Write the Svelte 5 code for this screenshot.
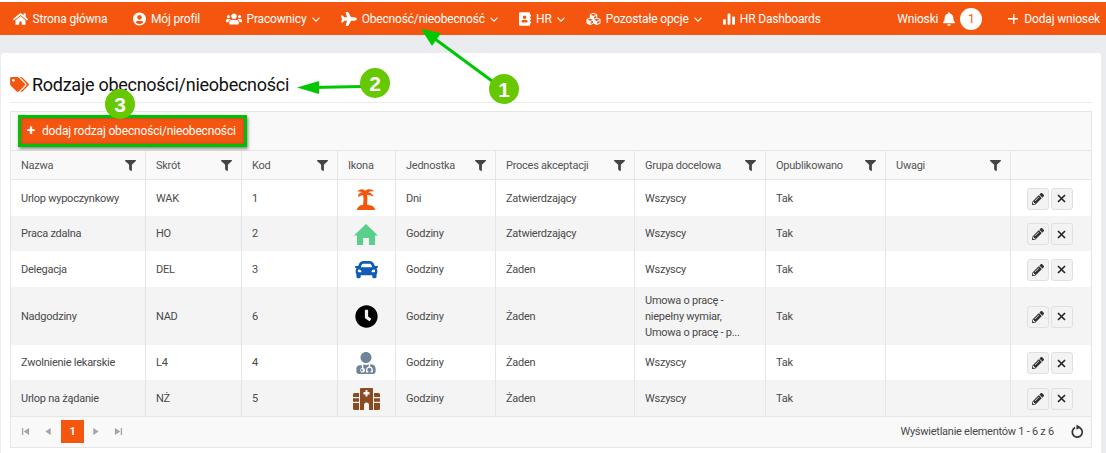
<script>
  const p = {
    home: ['0 0 576 512', 'M280.37 148.26L96 300.11V464a16 16 0 0 0 16 16l112.06-.29a16 16 0 0 0 15.92-16V368a16 16 0 0 1 16-16h64a16 16 0 0 1 16 16v95.64a16 16 0 0 0 16 16.05L464 480a16 16 0 0 0 16-16V300L295.67 148.26a12.19 12.19 0 0 0-15.3 0zM571.6 251.47L488 182.56V44.05a12 12 0 0 0-12-12h-56a12 12 0 0 0-12 12v72.61L318.47 43a48 48 0 0 0-61 0L4.34 251.47a12 12 0 0 0-1.6 16.9l25.5 31A12 12 0 0 0 45.15 301l235.22-193.74a12.19 12.19 0 0 1 15.3 0L530.9 301a12 12 0 0 0 16.9-1.6l25.5-31a12 12 0 0 0-1.7-16.93z'],
    user: ['0 0 496 512', 'M248 8C111 8 0 119 0 256s111 248 248 248 248-111 248-248S385 8 248 8zm0 96c48.6 0 88 39.4 88 88s-39.4 88-88 88-88-39.4-88-88 39.4-88 88-88zm0 344c-58.7 0-111.3-26.6-146.5-68.2 18.8-35.4 55.6-59.8 98.5-59.8 2.4 0 4.8.4 7.1 1.1 13 4.2 26.6 6.9 40.9 6.9 14.3 0 28-2.7 40.9-6.9 2.3-.7 4.7-1.1 7.1-1.1 42.9 0 79.7 24.4 98.5 59.8C359.3 421.4 306.7 448 248 448z'],
    users: ['0 0 640 512', 'M96 224c35.3 0 64-28.7 64-64s-28.7-64-64-64-64 28.7-64 64 28.7 64 64 64zm448 0c35.3 0 64-28.7 64-64s-28.7-64-64-64-64 28.7-64 64 28.7 64 64 64zm32 32h-64c-17.6 0-33.5 7.1-45.1 18.6 40.3 22.1 68.9 62 75.1 109.4h66c17.7 0 32-14.3 32-32v-32c0-35.3-28.7-64-64-64zm-256 0c61.9 0 112-50.1 112-112S381.9 32 320 32 208 82.1 208 144s50.1 112 112 112zm76.8 32h-8.3c-20.8 10-43.9 16-68.5 16s-47.6-6-68.5-16h-8.3C179.6 288 128 339.6 128 403.2V432c0 26.5 21.5 48 48 48h288c26.5 0 48-21.5 48-48v-28.8c0-63.6-51.6-115.2-115.2-115.2zm-223.7-13.4C161.5 263.1 145.6 256 128 256H64c-35.3 0-64 28.7-64 64v32c0 17.7 14.3 32 32 32h65.9c6.3-47.4 34.9-87.3 75.2-109.4z'],
    plane: ['0 0 576 512', 'M480 192H365.71L260.61 8.06A16.014 16.014 0 0 0 246.71 0h-65.5c-10.63 0-18.3 10.17-15.38 20.39L214.86 192H112l-43.2-57.6c-3.02-4.03-7.77-6.4-12.8-6.4H16.01C5.6 128-2.04 137.78.49 147.88L32 256 .49 364.12C-2.04 374.22 5.6 384 16.01 384H56c5.04 0 9.78-2.37 12.8-6.4L112 320h102.86l-49.03 171.6c-2.92 10.22 4.75 20.4 15.38 20.4h65.5c5.74 0 11.04-3.08 13.89-8.06L365.71 320H480c35.35 0 96-28.65 96-64s-60.65-64-96-64z'],
    badge: ['0 0 448 512', 'M436 160c6.6 0 12-5.4 12-12v-40c0-6.6-5.4-12-12-12h-20V48c0-26.5-21.5-48-48-48H48C21.5 0 0 21.5 0 48v416c0 26.5 21.5 48 48 48h320c26.5 0 48-21.5 48-48v-48h20c6.6 0 12-5.4 12-12v-40c0-6.6-5.4-12-12-12h-20v-64h20c6.6 0 12-5.4 12-12v-40c0-6.6-5.4-12-12-12h-20v-64h20zm-228-32c35.3 0 64 28.7 64 64s-28.7 64-64 64-64-28.7-64-64 28.7-64 64-64zm112 236.800c0 10.600-10 19.200-22.400 19.200H118.400C106 384 96 375.400 96 364.800v-19.200c0-31.800 30.100-57.600 67.200-57.600h5c12.300 5.100 25.700 8 39.800 8s27.500-2.900 39.800-8h5c37.100 0 67.200 25.800 67.200 57.600v19.200z'],
    cubes: ['0 0 512 512', 'M488.6 250.2L392 214V105.5c0-15-9.3-28.4-23.4-33.7l-100-37.5c-8.1-3.1-17.1-3.1-25.3 0l-100 37.5c-14.1 5.3-23.4 18.7-23.4 33.7V214l-96.6 36.2C9.3 255.5 0 268.9 0 283.9V394c0 13.6 7.7 26.1 19.9 32.2l100 50c10.1 5.1 22.1 5.1 32.2 0l103.9-52 103.9 52c10.1 5.1 22.1 5.1 32.2 0l100-50c12.2-6.1 19.9-18.6 19.9-32.2V283.9c0-15-9.3-28.4-23.4-33.7zM358 214.8l-85 31.9v-68.2l85-37v73.3zM154 104.1l102-38.2 102 38.2v.6l-102 41.4-102-41.4v-.6zm84 291.1l-85 42.5v-79.1l85-38.8v75.4zm0-112l-102 41.4-102-41.4v-.6l102-38.2 102 38.2v.6zm240 112l-85 42.5v-79.1l85-38.8v75.4zm0-112l-102 41.4-102-41.4v-.6l102-38.2 102 38.2v.6z'],
    chart: ['0 0 512 512', 'M0 288c0-13 10-24 24-24h72c14 0 24 11 24 24v184c0 13-10 24-24 24H24c-14 0-24-11-24-24zM196 40c0-13 10-24 24-24h72c14 0 24 11 24 24v432c0 13-10 24-24 24h-72c-14 0-24-11-24-24zM392 176c0-13 10-24 24-24h72c14 0 24 11 24 24v296c0 13-10 24-24 24h-72c-14 0-24-11-24-24z'],
    bell: ['0 0 448 512', 'M224 512c35.32 0 63.97-28.65 63.97-64H160.03c0 35.35 28.65 64 63.97 64zm215.39-149.71c-19.32-20.76-55.47-51.99-55.47-154.29 0-77.7-54.48-139.9-127.94-155.16V32c0-17.67-14.32-32-31.98-32s-31.98 14.33-31.98 32v20.84C118.56 68.1 64.08 130.3 64.08 208c0 102.3-36.15 133.53-55.47 154.29-6 6.45-8.66 14.16-8.61 21.71.11 16.4 12.98 32 32.1 32h383.8c19.12 0 32-15.6 32.1-32 .05-7.55-2.61-15.27-8.61-21.71z'],
    tags: ['0 0 640 512', 'M497.941 225.941L286.059 14.059A48 48 0 0 0 252.118 0H48C21.49 0 0 21.49 0 48v204.118a48 48 0 0 0 14.059 33.941l211.882 211.882c18.744 18.745 49.136 18.746 67.882 0l204.118-204.118c18.745-18.745 18.745-49.137 0-67.882zM112 160c-26.51 0-48-21.49-48-48s21.49-48 48-48 48 21.49 48 48-21.49 48-48 48zm513.941 133.823L421.823 497.941c-18.745 18.745-49.137 18.745-67.882 0l-.36-.36L527.64 323.522c16.999-16.999 26.36-39.6 26.36-63.64s-9.362-46.641-26.36-63.64L331.397 0h48.721a48 48 0 0 1 33.941 14.059l211.882 211.882c18.745 18.745 18.745 49.137 0 67.882z'],
    filter: ['0 0 512 512', 'M487.976 0H24.028C2.71 0-8.047 25.866 7.058 40.971L192 225.941V432c0 7.831 3.821 15.17 10.237 19.662l80 55.98C298.02 518.69 320 507.493 320 487.98V225.941l184.947-184.97C520.021 25.896 509.338 0 487.976 0z'],
    car: ['0 0 512 512', 'M499.99 176h-59.87l-16.64-41.6C406.38 91.63 365.57 64 319.5 64h-127c-46.06 0-86.88 27.63-103.99 70.4L71.87 176H12.01C4.2 176-1.53 183.34.37 190.91l6 24C7.7 220.25 12.5 224 18.01 224h20.07C24.65 235.73 16 252.78 16 272v48c0 16.12 6.16 30.67 16 41.93V416c0 17.67 14.33 32 32 32h32c17.67 0 32-14.33 32-32v-32h256v32c0 17.67 14.33 32 32 32h32c17.67 0 32-14.33 32-32v-54.07c9.84-11.25 16-25.8 16-41.93v-48c0-19.22-8.65-36.27-22.07-48H494c5.51 0 10.31-3.75 11.64-9.09l6-24c1.89-7.57-3.84-14.91-11.65-14.91zm-352.06-17.83c7.29-18.22 24.94-30.17 44.57-30.17h127c19.63 0 37.28 11.95 44.57 30.17L384 208H128l19.93-49.83zM96 319.8c-19.2 0-32-12.76-32-31.9S76.8 256 96 256s48 28.71 48 47.85-28.8 15.95-48 15.95zm320 0c-19.2 0-48 3.19-48-15.95S396.8 256 416 256s32 12.76 32 31.9-12.8 31.9-32 31.9z'],
    clock: ['0 0 512 512', 'M256 8C119 8 8 119 8 256s111 248 248 248 248-111 248-248S393 8 256 8zm57.1 350.1L224.9 294c-3.1-2.3-4.9-5.9-4.9-9.7V116c0-6.6 5.4-12 12-12h48c6.6 0 12 5.4 12 12v137.7l63.5 46.2c5.4 3.9 6.5 11.4 2.6 16.8l-28.2 38.8c-3.9 5.3-11.4 6.5-16.8 2.6z'],
    doc: ['0 0 448 512', 'M224 256c70.7 0 128-57.3 128-128S294.7 0 224 0 96 57.3 96 128s57.3 128 128 128zM104 424c0 13.3 10.7 24 24 24s24-10.7 24-24-10.7-24-24-24-24 10.7-24 24zm216-135.4v49c36.5 7.4 64 39.8 64 78.4v41.7c0 7.6-5.4 14.2-12.9 15.7l-32.2 6.4c-4.3.9-8.5-1.9-9.4-6.3l-3.1-15.7c-.9-4.3 1.9-8.6 6.3-9.4l19.3-3.9V416c0-62.8-96-65.1-96 1.9v26.7l19.3 3.9c4.3.9 7.1 5.1 6.3 9.4l-3.1 15.7c-.9 4.3-5.1 7.1-9.4 6.3l-31.2-4.2c-7.9-1.1-13.8-7.8-13.8-15.9V416c0-38.6 27.5-70.9 64-78.4v-45.2c-2.2-.7-4.4-1.1-6.7-1.9-18 6.3-37.3 9.5-57.3 9.5s-39.3-3.2-57.3-9.5c-1.9.6-3.8 1-5.7 1.7v77.3c23.1 6.9 40 28.1 40 53.4 0 30.9-25.1 56-56 56s-56-25.1-56-56c0-25.3 16.9-46.5 40-53.4v-59.4C29.3 298.9 0 341.1 0 390.4V456c0 30.9 25.1 56 56 56h336c30.9 0 56-25.1 56-56v-65.6c0-48.8-29.1-91.3-72-101.8z'],
    pencil: ['0 0 512 512', 'M497.9 142.1l-46.1 46.1c-4.7 4.7-12.3 4.7-17 0l-111-111c-4.7-4.7-4.7-12.3 0-17l46.1-46.1c18.7-18.7 49.1-18.7 67.9 0l60.1 60.1c18.8 18.7 18.8 49.1 0 67.9zM284.2 99.8L21.6 362.4.4 483.9c-2.9 16.4 11.4 30.6 27.8 27.8l121.5-21.3 262.6-262.6c4.7-4.7 4.7-12.3 0-17l-111-111c-4.8-4.7-12.4-4.7-17.1 0zM124.1 339.9c-5.5-5.5-5.5-14.3 0-19.8l154-154c5.5-5.5 14.3-5.5 19.8 0s5.5 14.3 0 19.8l-154 154c-5.5 5.5-14.3 5.5-19.8 0zM88 424h48v36.3l-64.5 11.3-31.1-31.1L51.7 376H88v48z'],
    palm: ['0 0 20 22', 'M1 22c0-3 3-5 6-5.300C7.600 13 7.700 9.500 7 7.200 5 7.300 3.600 8 2.400 9.300 1.600 6.500 3.600 4.400 6 4.300 4.800 3.400 3 3.300 1.300 3.700 2.800 1.200 6.600.2 9 2.700 11.200.500 15.800.5 18.600 3.600 16.400 3.100 14 3.200 12.400 4.400 15 4.500 17 6 17.400 8.700 15.500 7.300 13 6.900 10.900 6.900 11.700 10 11.500 13.500 10.900 16.700 14.800 16.800 19 18.500 19 22z'],
    house: ['0 0 24 21', 'M12 0 24 11.500h-3V21h-6v-7H9v7H3v-9.500H0z'],
    hospital: ['0 0 27 22', 'M8 0h11a1 1 0 0 1 1 1v21h-4v-5a2.500 2.500 0 0 0-5 0v5H7V1a1 1 0 0 1 1-1zM12.500 2v2h-2v2.500h2v2h2v-2h2V4h-2V2zM1.500 5H6v4H0V6.500A1.500 1.500 0 0 1 1.500 5zM0 10.300h6v3.500H0zM0 15.100h6V22H1.500A1.500 1.500 0 0 1 0 20.500zM21 5h4.500A1.500 1.500 0 0 1 27 6.500V9h-6zM21 10.300h6v3.500h-6zM21 15.100h6v5.400a1.500 1.500 0 0 1-1.500 1.500H21z'],
    first: ['0 0 10 10', 'M1 1h1.500v8H1zM9 1v8L3 5z'],
    prev: ['0 0 10 10', 'M7.500 1v8L1.500 5z'],
    next: ['0 0 10 10', 'M2.500 1v8l6-4z'],
    last: ['0 0 10 10', 'M1 1v8l6-4zM7.500 1H9v8H7.500z']
  };

  const leftNav = [
    { icon: 'home', label: 'Strona główna', w: 15 },
    { icon: 'user', label: 'Mój profil', w: 13 },
    { icon: 'users', label: 'Pracownicy', w: 16, caret: true },
    { icon: 'plane', label: 'Obecność/nieobecność', w: 16, caret: true },
    { icon: 'badge', label: 'HR', w: 12, caret: true },
    { icon: 'cubes', label: 'Pozostałe opcje', w: 15, caret: true },
    { icon: 'chart', label: 'HR Dashboards', w: 12 }
  ];

  const cols = [
    { name: 'Nazwa', w: 134, filter: true },
    { name: 'Skrót', w: 96, filter: true },
    { name: 'Kod', w: 96, filter: true },
    { name: 'Ikona', w: 58 },
    { name: 'Jednostka', w: 100, filter: true },
    { name: 'Proces akceptacji', w: 139, filter: true },
    { name: 'Grupa docelowa', w: 131, filter: true },
    { name: 'Opublikowano', w: 120, filter: true },
    { name: 'Uwagi', w: 125, filter: true },
    { name: '', w: 81 }
  ];

  const rows = [
    { n: 'Urlop wypoczynkowy', s: 'WAK', k: '1', i: 'palm', c: '#f5560f', w: 20, h: 22, u: 'Dni', a: 'Zatwierdzający', g: 'Wszyscy', rh: 36 },
    { n: 'Praca zdalna', s: 'HO', k: '2', i: 'house', c: '#58cf8a', w: 24, h: 21, u: 'Godziny', a: 'Zatwierdzający', g: 'Wszyscy', rh: 35 },
    { n: 'Delegacja', s: 'DEL', k: '3', i: 'car', c: '#0f5bb5', w: 23, h: 23, u: 'Godziny', a: 'Żaden', g: 'Wszyscy', rh: 36 },
    { n: 'Nadgodziny', s: 'NAD', k: '6', i: 'clock', c: '#000', w: 23, h: 23, u: 'Godziny', a: 'Żaden', g: 'Umowa o pracę - niepełny wymiar, Umowa o pracę - p...', rh: 58 },
    { n: 'Zwolnienie lekarskie', s: 'L4', k: '4', i: 'doc', c: '#6f8499', w: 20, h: 22, u: 'Godziny', a: 'Żaden', g: 'Wszyscy', rh: 35 },
    { n: 'Urlop na żądanie', s: 'NŻ', k: '5', i: 'hospital', c: '#8a4b20', w: 27, h: 22, u: 'Godziny', a: 'Żaden', g: 'Wszyscy', rh: 36 }
  ];
</script>

{#snippet icon(name, w, h, color = 'currentColor')}
  <svg class="ico" width={w} height={h} viewBox={p[name][0]} fill={color} aria-hidden="true"><path d={p[name][1]} /></svg>
{/snippet}

{#snippet caret()}
  <svg class="caret" width="8" height="5" viewBox="0 0 8 5" fill="none" stroke="currentColor" stroke-width="1.100" aria-hidden="true"><path d="M.5.700 4 4.200 7.500.700" /></svg>
{/snippet}

<div class="page">
  <nav class="nav">
    <ul class="nav-left">
      {#each leftNav as item}
        <li>
          {@render icon(item.icon, item.w, 14)}
          <span>{item.label}</span>
          {#if item.caret}{@render caret()}{/if}
        </li>
      {/each}
    </ul>
    <div class="nav-right">
      <div class="requests">
        <span>Wnioski</span>
        {@render icon('bell', 12, 14)}
        <span class="count">1</span>
      </div>
      <div class="add">
        <span class="add-plus"></span>
        <span>Dodaj wniosek</span>
      </div>
    </div>
  </nav>

  <main class="card">
    <h1>{@render icon('tags', 19, 15, '#f5560f')}<span>Rodzaje obecności/nieobecności</span></h1>
    <section class="grid">
      <div class="toolbar">
        <button class="add-type"><b>+</b>dodaj rodzaj obecności/nieobecności</button>
      </div>
      <table>
        <colgroup>
          {#each cols as c}<col style="width:{c.w}px" />{/each}
        </colgroup>
        <thead>
          <tr>
            {#each cols as c}
              <th>
                <div class="th">
                  <span>{c.name}</span>
                  {#if c.filter}{@render icon('filter', 11, 11, '#444')}{/if}
                </div>
              </th>
            {/each}
          </tr>
        </thead>
        <tbody>
          {#each rows as r}
            <tr style="height:{r.rh}px">
              <td>{r.n}</td>
              <td>{r.s}</td>
              <td>{r.k}</td>
              <td class="ic">{@render icon(r.i, r.w, r.h, r.c)}</td>
              <td>{r.u}</td>
              <td>{r.a}</td>
              <td>{r.g}</td>
              <td>Tak</td>
              <td></td>
              <td class="act">
                <div class="actions">
                  <button aria-label="Edytuj">{@render icon('pencil', 12, 12, '#333')}</button>
                  <button aria-label="Usuń">
                    <svg width="9" height="9" viewBox="0 0 9 9" stroke="#222" stroke-width="1.600" aria-hidden="true"><path d="M1 1l7 7M8 1L1 8" /></svg>
                  </button>
                </div>
              </td>
            </tr>
          {/each}
        </tbody>
      </table>
      <footer class="pager">
        <div class="pages">
          <span class="pg">{@render icon('first', 9, 9, '#a5a5a5')}</span>
          <span class="pg prev">{@render icon('prev', 9, 9, '#a5a5a5')}</span>
          <span class="pg current">1</span>
          <span class="pg">{@render icon('next', 9, 9, '#a5a5a5')}</span>
          <span class="pg">{@render icon('last', 9, 9, '#a5a5a5')}</span>
        </div>
        <div class="info">
          <span>Wyświetlanie elementów 1 - 6 z 6</span>
          <svg width="14" height="15" viewBox="0 0 14 15" fill="none" stroke="#333" stroke-width="1.700" aria-hidden="true"><path d="M5.200 3.600A5 5 0 1 0 8 3.200" /><path d="M6.500 .6 10.500 3.200 6.500 5.800z" fill="#333" stroke="none" /></svg>
        </div>
      </footer>
    </section>
  </main>

  <svg class="marks" width="1106" height="453" viewBox="0 0 1106 453" aria-hidden="true">
    <g fill="#00c800" stroke="#00c800">
      <path d="M492 81 431 36" stroke-width="3" fill="none" />
      <path d="M421 29 441 33 432 46z" stroke="none" />
      <path d="M362 86.500 312 87.500" stroke-width="3" fill="none" />
      <path d="M297 87.500 319 81 319 94z" stroke="none" />
    </g>
    <g fill="#66c800">
      <circle cx="504" cy="89" r="15" />
      <circle cx="375" cy="83" r="15" />
      <circle cx="120" cy="104" r="15" />
    </g>
    <g class="num" fill="#fff" text-anchor="middle">
      <text x="504" y="97">1</text>
      <text x="375" y="91">2</text>
      <text x="120" y="112">3</text>
    </g>
  </svg>
</div>

<style>
  :global(body) {
    margin: 0;
    background: #fff;
  }
  .page {
    position: relative;
    width: 1106px;
    height: 453px;
    padding-top: 2px;
    box-sizing: border-box;
    overflow: hidden;
    background: linear-gradient(#fff 2px, #ebecef 2px);
    font-family: Roboto, "Liberation Sans", sans-serif;
    font-size: 11px;
    letter-spacing: -.25px;
    color: #4a4a4a;
  }
  .ico { display: block; flex: none; }
  .nav {
    height: 33px;
    padding: 0 6px 0 13px;
    display: flex;
    align-items: center;
    justify-content: space-between;
    background: #f5560f;
    color: #fff;
    font-size: 12px;
    letter-spacing: -.17px;
  }
  .nav-left {
    display: flex;
    gap: 26px;
    margin: 0;
    padding: 0;
    list-style: none;
  }
  .nav-left li {
    display: flex;
    align-items: center;
    gap: 4.600px;
  }
  .caret { margin: 2px -5px 0 1px; }
  .nav-right {
    display: flex;
    align-items: center;
    gap: 26px;
  }
  .requests, .add {
    display: flex;
    align-items: center;
    gap: 6px;
  }
  .requests { gap: 5px; }
  .count {
    width: 22px;
    height: 22px;
    border-radius: 50%;
    background: #fff;
    color: #f5560f;
    text-align: center;
    line-height: 22px;
  }
  .add-plus {
    position: relative;
    width: 10px;
    height: 10px;
    background:
      linear-gradient(#fff, #fff) center / 10px 1.500px no-repeat,
      linear-gradient(#fff, #fff) center / 1.500px 10px no-repeat;
  }
  .card {
    margin: 18px 5px 0 1px;
    height: 420px;
    padding: 0 9px;
    background: #fff;
    border-radius: 3px;
    box-sizing: border-box;
  }
  h1 {
    display: flex;
    align-items: center;
    gap: 3px;
    height: 50px;
    margin: 0;
    padding-top: 14px;
    box-sizing: border-box;
    border-bottom: 1px solid #ebebeb;
    font-size: 18px;
    line-height: 16px;
    letter-spacing: -.27px;
    font-weight: 400;
    color: #111;
  }
  .grid {
    margin-top: 8px;
    border: 1px solid #e6e6e6;
  }
  .toolbar {
    height: 39px;
    padding: 3px 0 0 7px;
    box-sizing: border-box;
    background: #f9f9f9;
    border-bottom: 1px solid #e6e6e6;
  }
  .add-type {
    display: block;
    width: 229px;
    height: 32px;
    padding: 0 0 0 6px;
    border: 3px solid #00c000;
    box-sizing: border-box;
    background: #f5560f;
    box-shadow: 1px 2px 3px rgba(0, 0, 0, .45), inset 0 0 3px rgba(90, 90, 90, .8);
    color: #fff;
    font: 12px Roboto, sans-serif;
    letter-spacing: -.17px;
    text-align: left;
    white-space: nowrap;
  }
  .add-type b { font-size: 15px; line-height: 12px; margin-right: 7px; }
  table {
    width: 1080px;
    table-layout: fixed;
    border-collapse: collapse;
  }
  th {
    height: 28px;
    padding: 0 9px 0 10.500px;
    background: #f9f9f9;
    border-left: 1px solid #e6e6e6;
    border-bottom: 1px solid #e6e6e6;
    font-weight: 400;
    color: #555;
    text-align: left;
  }
  th:first-child { border-left: 0; padding-left: 10px; }
  .th {
    display: flex;
    align-items: center;
    justify-content: space-between;
  }
  td {
    padding: 2px 10px 0 10.500px;
    border-left: 1px solid #e6e6e6;
    line-height: 16px;
    vertical-align: middle;
  }
  td:first-child { border-left: 0; padding-left: 10px; }
  tbody tr:nth-child(even) td { background: #f4f4f4; }
  .ic .ico { margin: 0 auto; }
  td.act { padding-right: 12.500px; }
  .actions {
    display: flex;
    justify-content: center;
    gap: 2px;
  }
  .actions button {
    width: 22px;
    height: 22px;
    padding: 0;
    display: flex;
    align-items: center;
    justify-content: center;
    background: #f3f3f3;
    border: 1px solid #e0e0e0;
    border-radius: 3px;
  }
  .pager {
    height: 31px;
    padding: 0 7px 0 3px;
    box-sizing: border-box;
    display: flex;
    align-items: center;
    justify-content: space-between;
    background: #f9f9f9;
    border-top: 1px solid #e6e6e6;
  }
  .pages { display: flex; align-items: center; }
  .pg {
    width: 23px;
    height: 23px;
    display: flex;
    align-items: center;
    justify-content: center;
  }
  .prev { margin-right: 1px; }
  .current {
    background: #f5560f;
    color: #fff;
    font-weight: 700;
  }
  .info {
    display: flex;
    align-items: center;
    gap: 16px;
  }
  .marks {
    position: absolute;
    left: 0;
    top: 0;
    pointer-events: none;
  }
  .num {
    font: 700 21px "Liberation Sans", sans-serif;
    letter-spacing: 0;
  }
</style>
